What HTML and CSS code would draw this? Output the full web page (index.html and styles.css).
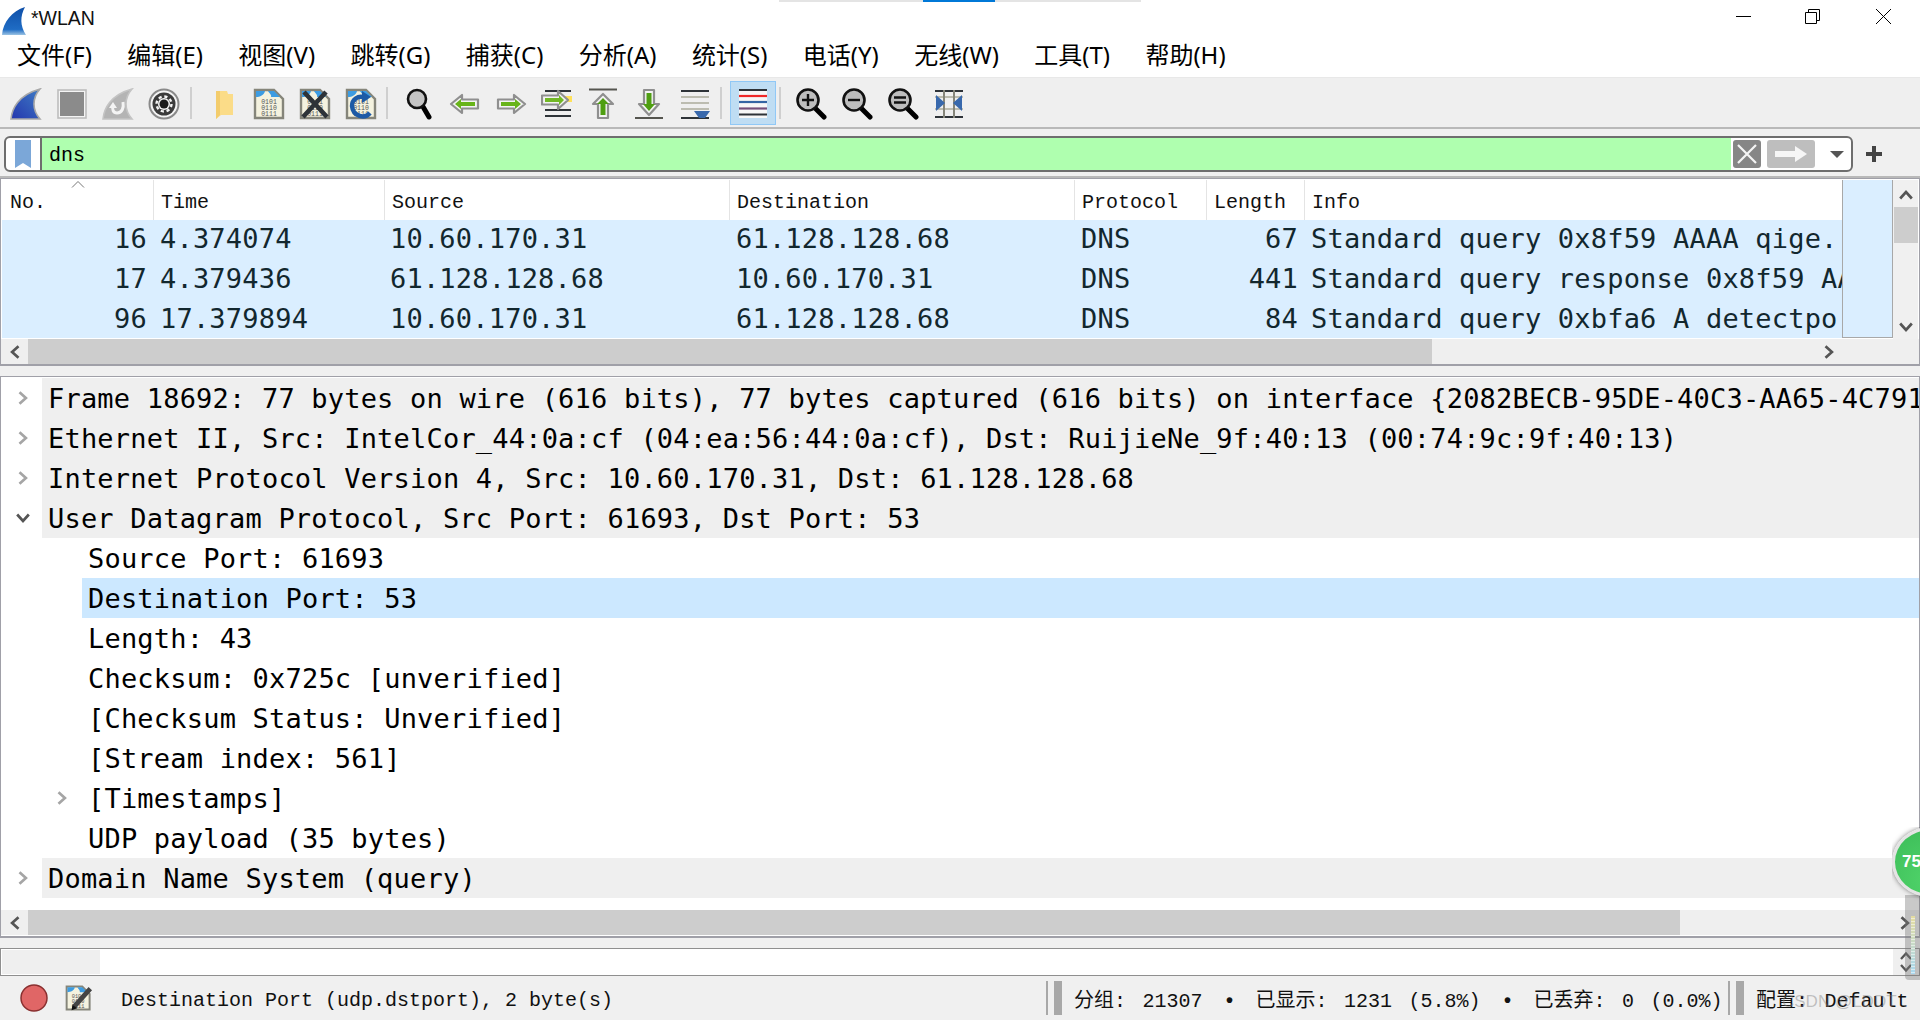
FILE: index.html
```html
<!DOCTYPE html>
<html lang="en">
<head>
    <meta charset="UTF-8">
    <title>*WLAN</title>
    <link rel="stylesheet" href="styles.css">
</head>
<body>
<svg class="defs" width="0" height="0">
    <defs>
        <linearGradient id="finblue" x1="0" y1="1" x2="1" y2="0">
            <stop offset="0" stop-color="#2436ae"/>
            <stop offset="1" stop-color="#3f7cc4"/>
        </linearGradient>
        <linearGradient id="titlefin" x1="0" y1="0" x2="0" y2="1">
            <stop offset="0" stop-color="#0f4fa8"/>
            <stop offset="0.8" stop-color="#1f6cc4"/>
            <stop offset="1" stop-color="#9cc4e4"/>
        </linearGradient>
        <symbol id="chev" viewBox="0 0 12 12">
            <path d="M3 1 8.500 6 3 11" fill="none" stroke="currentColor" stroke-width="2.300"/>
        </symbol>
        <symbol id="file" viewBox="0 0 32 32">
            <path d="M2 2H21L30 11V30H2Z" fill="#f4f2df" stroke="#85857a" stroke-width="2.400"/>
            <path d="M3 3H12C11 7 7 9 3 9Z" fill="#3d9ce2"/>
            <path d="M15 3H21L27 9H18C19 7 16 5 15 3Z" fill="#3d9ce2"/>
            <text x="16" y="16" class="bits">0101</text>
            <text x="16" y="22" class="bits">0110</text>
            <text x="16" y="28" class="bits">0111</text>
        </symbol>
        <symbol id="glass" viewBox="0 0 32 32">
            <path d="M19 19 29 29" stroke="#000" stroke-width="5" stroke-linecap="round"/>
            <circle cx="13" cy="12" r="10.500" fill="#bdbdbd" stroke="#111" stroke-width="2.600"/>
        </symbol>
    </defs>
</svg>

<div class="sliver"><span class="sliver-on"></span></div>

<div class="titlebar">
    <svg class="title-icon" viewBox="0 0 24 28"><path d="M0 28C1 15 10 4 23 0 18 9 18 19 24 28Z" fill="url(#titlefin)"/></svg>
    <span class="title-text">*WLAN</span>
    <div class="winbtns">
        <svg width="15" height="15" viewBox="0 0 15 15"><path d="M0 7.500H15" stroke="#000"/></svg>
        <svg class="win-restore" width="15" height="15" viewBox="0 0 15 15"><path d="M.5 3.500H11.500V14.500H.5ZM3.500 3.500V.5H14.500V11.500H11.500" fill="none" stroke="#000"/></svg>
        <svg width="15" height="15" viewBox="0 0 15 15"><path d="M0 0 15 15M15 0 0 15" stroke="#000"/></svg>
    </div>
</div>

<div class="menubar">
    <span>文件(F)</span>
    <span>编辑(E)</span>
    <span>视图(V)</span>
    <span>跳转(G)</span>
    <span>捕获(C)</span>
    <span>分析(A)</span>
    <span>统计(S)</span>
    <span>电话(Y)</span>
    <span>无线(W)</span>
    <span>工具(T)</span>
    <span>帮助(H)</span>
</div>

<div class="toolbar">
    <div class="tool"><svg viewBox="0 0 32 32"><path d="M1 31C2 21 8 7 30 1 22 10 22 22 30 31Z" fill="url(#finblue)" stroke="#a9a9a9" stroke-width="1.600"/></svg></div>
    <div class="tool"><svg viewBox="0 0 32 32"><rect x="3" y="3" width="26" height="26" fill="#8b8b8b" stroke="#f4f4f4" stroke-width="2"/><rect x="2" y="2" width="28" height="28" fill="none" stroke="#bdbdbd" stroke-width="1.600"/></svg></div>
    <div class="tool"><svg viewBox="0 0 32 32"><path d="M1 31C2 21 8 7 30 1 22 10 22 22 30 31Z" fill="#b4b4b4" stroke="#c4c4c4" stroke-width="1.600"/><path d="M21 14C22 20 20 25 15 25 11 25 10 21 11 18" fill="none" stroke="#f4f4f4" stroke-width="3"/><path d="M7 20 11 14 15 20Z" fill="#f4f4f4"/></svg></div>
    <div class="tool"><svg viewBox="0 0 32 32"><circle cx="16" cy="16" r="14.500" fill="#f4f4f4" stroke="#8a8a8a" stroke-width="2"/><circle cx="16" cy="16" r="11.500" fill="#3b3b3b"/><circle cx="16" cy="16" r="7.500" fill="none" stroke="#f4f4f4" stroke-width="2.400" stroke-dasharray="3.200 2.700"/><circle cx="16" cy="16" r="6" fill="#f4f4f4"/><circle cx="16" cy="16" r="4.500" fill="#1c1c1c"/></svg></div>
    <i class="sep"></i>
    <div class="tool"><svg viewBox="0 0 32 32"><path d="M9 3H20L21 6H26V27H14L9 31Z" fill="#fbdc88"/><path d="M9 3H13V27L9 31Z" fill="#f3cc6c"/></svg></div>
    <div class="tool"><svg><use href="#file"/></svg></div>
    <div class="tool"><svg viewBox="0 0 32 32"><use href="#file" width="32" height="32"/><path d="M5 4 28 29M27 4 4 29" stroke="#2e3338" stroke-width="4.600"/></svg></div>
    <div class="tool"><svg viewBox="0 0 32 32"><use href="#file" width="32" height="32"/><path d="M25 25C20 31 8 29 7 18 7 11 13 8 18 9" fill="none" stroke="#1d5aa6" stroke-width="4.400"/><path d="M17 3 26 9 17 15Z" fill="#1d5aa6"/></svg></div>
    <i class="sep sep-b"></i>
    <div class="tool"><svg viewBox="0 0 32 32"><path d="M19 17 26 29" stroke="#000" stroke-width="5" stroke-linecap="round"/><ellipse cx="14" cy="11" rx="9" ry="9" fill="#c4c4c4" stroke="#111" stroke-width="2.600"/></svg></div>
    <div class="tool"><svg viewBox="0 0 32 32"><path d="M2 16 13 7V11.500H29V20.500H13V25Z" fill="#f4f4f4" stroke="#8f8f8f" stroke-width="2.200" stroke-linejoin="round"/><path d="M6 16 12 11V14H26V18H12V21Z" fill="#68b41a"/></svg></div>
    <div class="tool"><svg viewBox="0 0 32 32"><path d="M30 16 19 7V11.500H3V20.500H19V25Z" fill="#f4f4f4" stroke="#8f8f8f" stroke-width="2.200" stroke-linejoin="round"/><path d="M26 16 20 11V14H6V18H20V21Z" fill="#68b41a"/></svg></div>
    <div class="tool"><svg viewBox="0 0 32 32"><path d="M4 3H30M4 22H30M4 28H30M4 9H30" stroke="#2e3338" stroke-width="2.200"/><rect x="24" y="8" width="7" height="6" fill="#ffe15a"/><path d="M27 12 17 3V7.500H1V16.500H17V21Z" fill="#f4f4f4" stroke="#8f8f8f" stroke-width="2.200" stroke-linejoin="round"/><path d="M23 12 18 7V10H4V14H18V17Z" fill="#72b826"/></svg></div>
    <div class="tool"><svg viewBox="0 0 32 32"><path d="M2 1.500H30" stroke="#55554f" stroke-width="2"/><path d="M16 6 26 16H21V30H11V16H6Z" fill="#f4f4f4" stroke="#8f8f8f" stroke-width="2.200" stroke-linejoin="round"/><path d="M16 10 22 16H18.500V27H13.500V16H10Z" fill="#4f9e12"/></svg></div>
    <div class="tool"><svg viewBox="0 0 32 32"><path d="M2 30H30" stroke="#55554f" stroke-width="2"/><path d="M16 27 26 16H21V2H11V16H6Z" fill="#f4f4f4" stroke="#8f8f8f" stroke-width="2.200" stroke-linejoin="round"/><path d="M16 23 22 16H18.500V5H13.500V16H10Z" fill="#4f9e12"/></svg></div>
    <div class="tool"><svg viewBox="0 0 32 32"><path d="M2 3H30M2 30H30" stroke="#2e3338" stroke-width="2.200"/><path d="M2 9H30M2 15H30M2 21H30" stroke="#bcbcb0" stroke-width="2.200"/><path d="M15 23H31L26 30H20Z" fill="#3868ac"/></svg></div>
    <i class="sep sep-c"></i>
    <div class="tool tool-on"><svg viewBox="0 0 32 32"><rect x="2" y="2" width="28" height="29" fill="#f7f7f7"/><path d="M2 3H30M2 27.500H30" stroke="#2e3338" stroke-width="2.200"/><path d="M2 9H30" stroke="#ef2929" stroke-width="2.200"/><path d="M2 15H30" stroke="#3465a4" stroke-width="2.200"/><path d="M2 21.500H30" stroke="#75507b" stroke-width="2.200"/></svg></div>
    <i class="sep sep-d"></i>
    <div class="tool"><svg viewBox="0 0 32 32"><use href="#glass" width="32" height="32"/><path d="M13 6V18M7 12H19" stroke="#111" stroke-width="2.400"/></svg></div>
    <div class="tool"><svg viewBox="0 0 32 32"><use href="#glass" width="32" height="32"/><path d="M7 12H19" stroke="#111" stroke-width="2.400"/></svg></div>
    <div class="tool"><svg viewBox="0 0 32 32"><use href="#glass" width="32" height="32"/><path d="M7 9.500H19M7 14.500H19" stroke="#111" stroke-width="2.400"/></svg></div>
    <div class="tool"><svg viewBox="0 0 32 32"><path d="M2 9H30M2 21H30" stroke="#bcbcb0" stroke-width="2.200"/><path d="M2 3H30M2 29H30" stroke="#2e3338" stroke-width="2.200"/><path d="M11 2V30M21 2V30" stroke="#85857a" stroke-width="2"/><path d="M3 7 12 15 3 23ZM29 7 20 15 29 23Z" fill="#3868ac"/></svg></div>
</div>

<div class="filterbar">
    <div class="filter">
        <div class="filter-mark"><svg width="16" height="28" viewBox="0 0 16 28"><path d="M0 0H16V28L8 23 0 28Z" fill="#7ba7d8"/></svg></div>
        <div class="filter-text">dns</div>
        <div class="filter-clear"><svg width="20" height="20" viewBox="0 0 20 20"><path d="M1 1 19 19M19 1 1 19" stroke="#f4f4f4" stroke-width="2.200"/></svg></div>
        <div class="filter-apply"><svg width="34" height="16" viewBox="0 0 34 16"><path d="M1 5H21V0L33 8 21 16V11H1Z" fill="#f6f6f6"/></svg></div>
        <div class="filter-drop"></div>
    </div>
    <svg class="filter-plus" width="16" height="16" viewBox="0 0 16 16"><path d="M8 0V16M0 8H16" stroke="#444" stroke-width="4"/></svg>
</div>

<div class="packets">
    <div class="packets-main">
        <div class="plist">
            <div class="prow phead">
                <div>No.<svg class="sort" width="14" height="7" viewBox="0 0 14 7"><path d="M1 6.500 7 .5 13 6.500" fill="none" stroke="#777"/></svg></div>
                <div>Time</div>
                <div>Source</div>
                <div>Destination</div>
                <div>Protocol</div>
                <div>Length</div>
                <div>Info</div>
            </div>
            <div class="prow pdata">
                <div class="num">16</div><div>4.374074</div><div>10.60.170.31</div><div>61.128.128.68</div><div>DNS</div><div class="num">67</div><div>Standard query 0x8f59 AAAA qige..</div>
            </div>
            <div class="prow pdata">
                <div class="num">17</div><div>4.379436</div><div>61.128.128.68</div><div>10.60.170.31</div><div>DNS</div><div class="num">441</div><div>Standard query response 0x8f59 AAAA</div>
            </div>
            <div class="prow pdata">
                <div class="num">96</div><div>17.379894</div><div>10.60.170.31</div><div>61.128.128.68</div><div>DNS</div><div class="num">84</div><div>Standard query 0xbfa6 A detectpo</div>
            </div>
        </div>
        <div class="minimap"></div>
        <div class="vscroll">
            <svg class="chev up"><use href="#chev"/></svg>
            <div class="vthumb"></div>
            <svg class="chev down"><use href="#chev"/></svg>
        </div>
    </div>
    <div class="hscroll">
        <div class="hbtn"><svg class="chev left"><use href="#chev"/></svg></div>
        <div class="hthumb thumb-a"></div>
        <div class="hbtn hbtn-a"><svg class="chev"><use href="#chev"/></svg></div>
    </div>
</div>

<div class="details">
    <div class="tree">
        <div class="node top"><svg class="chev tw"><use href="#chev"/></svg><span>Frame 18692: 77 bytes on wire (616 bits), 77 bytes captured (616 bits) on interface {2082BECB-95DE-40C3-AA65-4C791</span></div>
        <div class="node top"><svg class="chev tw"><use href="#chev"/></svg><span>Ethernet II, Src: IntelCor_44:0a:cf (04:ea:56:44:0a:cf), Dst: RuijieNe_9f:40:13 (00:74:9c:9f:40:13)</span></div>
        <div class="node top"><svg class="chev tw"><use href="#chev"/></svg><span>Internet Protocol Version 4, Src: 10.60.170.31, Dst: 61.128.128.68</span></div>
        <div class="node top"><svg class="chev tw open"><use href="#chev"/></svg><span>User Datagram Protocol, Src Port: 61693, Dst Port: 53</span></div>
        <div class="node sub"><span>Source Port: 61693</span></div>
        <div class="node sub sel"><span>Destination Port: 53</span></div>
        <div class="node sub"><span>Length: 43</span></div>
        <div class="node sub"><span>Checksum: 0x725c [unverified]</span></div>
        <div class="node sub"><span>[Checksum Status: Unverified]</span></div>
        <div class="node sub"><span>[Stream index: 561]</span></div>
        <div class="node sub"><svg class="chev tw tw-sub"><use href="#chev"/></svg><span>[Timestamps]</span></div>
        <div class="node sub"><span>UDP payload (35 bytes)</span></div>
        <div class="node top"><svg class="chev tw"><use href="#chev"/></svg><span>Domain Name System (query)</span></div>
    </div>
    <div class="hscroll">
        <div class="hbtn"><svg class="chev left"><use href="#chev"/></svg></div>
        <div class="hthumb thumb-b"></div>
        <div class="hbtn hbtn-b"><svg class="chev"><use href="#chev"/></svg></div>
    </div>
</div>

<div class="bytes">
    <div class="bytes-stub"></div>
    <div class="bytes-spin">
        <svg class="chev up small"><use href="#chev"/></svg>
        <svg class="chev down small"><use href="#chev"/></svg>
    </div>
</div>

<div class="statusbar">
    <svg class="st-led" width="28" height="28" viewBox="0 0 28 28"><circle cx="14" cy="14" r="13" fill="#e06666" stroke="#8a3030" stroke-width="1.500"/></svg>
    <svg class="st-note" width="30" height="30" viewBox="0 0 32 32"><use href="#file" width="28" height="32"/><path d="M10 25 27 6" stroke="#444" stroke-width="5"/><path d="M7 29 8 23 13 27Z" fill="#111"/></svg>
    <span class="st-msg">Destination Port (udp.dstport), 2 byte(s)</span>
    <i class="st-grip"></i>
    <span class="st-counts">分组: 21307<b>•</b>已显示: 1231 (5.8%)<b>•</b>已丢弃: 0 (0.0%)</span>
    <i class="st-grip st-grip-b"></i>
    <span class="st-profile">配置: Default</span>
</div>

<div class="watermark">CSDN @LDDT</div>
<div class="meter"><div class="meter-ball">75</div><div class="meter-bars"></div></div>
</body>
</html>
```

FILE: styles.css
```css
html, body {
    margin: 0;
    height: 1020px;
    overflow: hidden;
}
body {
    background-color: #f0f0f0;
    color: #000;
    font-family: "Liberation Mono", "Noto Sans CJK SC", monospace;
    font-size: 20px;
    position: relative;
}
.defs {
    position: absolute;
}
.bits {
    font-family: "Liberation Mono", monospace;
    font-size: 6.500px;
    fill: #555;
    text-anchor: middle;
}

/* window chrome */
.sliver {
    position: absolute;
    left: 779px;
    top: 0;
    width: 362px;
    height: 2px;
    background-color: #e4e4e4;
}
.sliver-on {
    display: block;
    margin-left: 144px;
    width: 72px;
    height: 2px;
    background-color: #0078d7;
}
.titlebar {
    height: 40px;
    box-sizing: border-box;
    padding-bottom: 4px;
    background: #fff;
    display: flex;
    align-items: center;
    font-family: "Liberation Sans", "Noto Sans", sans-serif;
    font-size: 19.500px;
}
.title-icon {
    width: 24px;
    height: 28px;
    margin: 6px 0 0 2px;
}
.title-text {
    margin-left: 5px;
    color: #111;
}
.winbtns {
    margin-left: auto;
    display: flex;
    gap: 54px;
    padding-right: 29px;
    margin-top: -4px;
}
.win-restore {
    margin-right: 2px;
}
.menubar {
    height: 37px;
    box-sizing: border-box;
    padding: 0 0 7px 0;
    margin-left: 0;
    background: #fff;
    display: flex;
    align-items: center;
    font-family: "Noto Sans", "Noto Sans CJK SC", sans-serif;
    font-size: 24px;
    line-height: 30px;
}
.menubar span {
    padding: 0 17.700px 0 17px;
    margin-right: 0.700px;
    white-space: nowrap;
}

/* toolbar */
.toolbar {
    height: 49px;
    border-top: 1px solid #e8e8e8;
    border-bottom: 2px solid #b9b9b9;
    background: #efefef;
    display: flex;
    align-items: center;
    padding-left: 3px;
    box-sizing: content-box;
}
.tool {
    width: 46px;
    height: 44px;
    padding-top: 2px;
    display: flex;
    align-items: center;
    justify-content: center;
    flex: none;
    box-sizing: border-box;
}
.tool svg {
    width: 32px;
    height: 32px;
}
.tool-on {
    padding-top: 0;
    background-color: #bfddf3;
    border: 1px solid #90c8f6;
}
.sep {
    flex: none;
    width: 2px;
    height: 32px;
    background-color: #cfcfcf;
    margin: 0 8px 0 3px;
}
.sep-b {
    margin: 0 8px 0 2px;
}
.sep-c {
    margin: 0 8px 0 2px;
}
.sep-d {
    margin: 0 7px 0 3px;
}

/* display filter */
.filterbar {
    height: 49px;
    display: flex;
    align-items: flex-start;
    padding-top: 7px;
    box-sizing: border-box;
    border-bottom: 2px solid #b9b9b9;
}
.filter {
    margin-left: 4px;
    width: 1849px;
    height: 36px;
    box-sizing: border-box;
    border: 2px solid #6e6e6e;
    border-radius: 6px;
    background: #fff;
    display: flex;
    align-items: center;
    overflow: hidden;
}
.filter-mark {
    width: 34px;
    height: 32px;
    border-right: 2px solid #6e6e6e;
    display: flex;
    justify-content: center;
    align-items: center;
    flex: none;
    box-sizing: content-box;
}
.filter-text {
    flex: 1;
    height: 32px;
    line-height: 36px;
    background-color: #afffaf;
    padding-left: 7px;
}
.filter-clear {
    width: 28px;
    height: 28px;
    margin: 0 6px 0 2px;
    background-color: #868686;
    border-radius: 3px;
    display: flex;
    align-items: center;
    justify-content: center;
    flex: none;
}
.filter-apply {
    width: 48px;
    height: 28px;
    background-color: #bebebe;
    border-radius: 3px;
    display: flex;
    align-items: center;
    justify-content: center;
    flex: none;
}
.filter-drop {
    width: 0;
    height: 0;
    flex: none;
    margin: 0 7px 0 15px;
    border-left: 7px solid transparent;
    border-right: 7px solid transparent;
    border-top: 7px solid #555;
}
.filter-plus {
    margin: 10px 0 0 13px;
}

/* packet list */
.packets {
    height: 188px;
    box-sizing: border-box;
    border: 1px solid #a0a0a8;
    border-width: 1px 1px 2px 1px;
    background: #f0f0f0;
}
.packets-main {
    height: 159px;
    display: flex;
    padding: 1px 1px 0 1px;
    background: #fff;
}
.plist {
    width: 1840px;
    flex: none;
    overflow: hidden;
}
.prow {
    display: grid;
    grid-template-columns: 151px 231px 345px 345px 132px 98px 538px;
    white-space: nowrap;
}
.prow > div {
    overflow: hidden;
    box-sizing: border-box;
}
.phead {
    height: 40px;
    color: #111;
    background: #fff;
}
.phead > div {
    height: 40px;
    line-height: 35px;
    padding: 5px 0 0 8px;
    border-right: 1px solid #e4e4e4;
    margin-right: -1px;
    position: relative;
}
.sort {
    position: absolute;
    left: 69px;
    top: 1px;
}
.pdata {
    height: 40px;
    line-height: 38px;
    background-color: #daeeff;
    color: #12272e;
    font-family: "DejaVu Sans Mono", monospace;
    font-size: 27px;
    letter-spacing: 0.2px;
}
.pdata > div {
    padding-left: 7px;
}
.pdata > div:nth-child(3) {
    padding-left: 6px;
}
.pdata > .num {
    text-align: right;
    padding: 0 6px 0 0;
}
.pdata:last-child {
    height: 38px;
}
.minimap {
    width: 49px;
    height: 157px;
    flex: none;
    background-color: #daeeff;
    border: 1px solid #a8a8a8;
    border-width: 0 1px 1px 1px;
    box-sizing: content-box;
}
.vscroll {
    flex: 1;
    background: #f0f0f0;
    display: flex;
    flex-direction: column;
    align-items: center;
    padding-top: 8px;
    box-sizing: border-box;
}
.vthumb {
    width: 24px;
    height: 36px;
    background-color: #cdcdcd;
    margin: 5px 0 77px;
}
.chev {
    display: block;
    width: 14px;
    height: 14px;
    color: #555;
    flex: none;
}
.chev.up {
    transform: rotate(-90deg);
}
.chev.down {
    transform: rotate(90deg);
}
.chev.left {
    transform: rotate(180deg);
}
.chev.small {
    width: 12px;
    height: 12px;
}
.hscroll {
    height: 25px;
    display: flex;
    align-items: center;
    background: #efefef;
}
.hbtn {
    width: 27px;
    height: 25px;
    display: flex;
    align-items: center;
    justify-content: center;
    flex: none;
}
.hthumb {
    height: 25px;
    background-color: #cdcdcd;
    flex: none;
}
.thumb-a {
    width: 1404px;
}
.thumb-b {
    width: 1652px;
}
.hbtn-a {
    margin-left: 383px;
}
.hbtn-b {
    margin-left: 211px;
}

/* packet details */
.details {
    margin-top: 10px;
    height: 562px;
    box-sizing: border-box;
    border: 1px solid #a0a0a8;
    border-width: 1px 1px 2px 1px;
    background: #fff;
    padding-top: 1px;
}
.tree {
    height: 532px;
    overflow: hidden;
    font-family: "DejaVu Sans Mono", monospace;
    font-size: 27px;
    letter-spacing: 0.2px;
    color: #000;
}
.node {
    height: 40px;
    line-height: 42px;
    white-space: nowrap;
    position: relative;
}
.node.top {
    padding-left: 47px;
    background: linear-gradient(to right, #fff 41px, #efefef 41px);
}
.node.sub {
    padding-left: 87px;
}
.node.sel {
    background: linear-gradient(to right, #fff 81px, #cce8ff 81px);
}
.tw {
    position: absolute;
    left: 15px;
    top: 13px;
    color: #a5a5a5;
}
.tw-sub {
    left: 54px;
}
.tw.open {
    transform: rotate(90deg);
    color: #555;
}

/* packet bytes */
.bytes {
    margin-top: 10px;
    height: 28px;
    box-sizing: border-box;
    border: 1px solid #8f8f8f;
    background: #fff;
    display: flex;
    justify-content: space-between;
}
.bytes-stub {
    width: 98px;
    background-color: #efefef;
    margin: 1px 0 1px 1px;
}
.bytes-spin {
    width: 26px;
    background-color: #efefef;
    display: flex;
    flex-direction: column;
    align-items: center;
    justify-content: center;
}

/* status bar */
.statusbar {
    height: 44px;
    display: flex;
    align-items: center;
    white-space: pre;
    color: #111;
}
.st-led {
    margin-left: 20px;
}
.st-note {
    margin-left: 17px;
}
.st-msg {
    margin: 4px 0 0 26px;
    width: 925px;
}
.st-grip {
    width: 2px;
    height: 34px;
    background-color: #a8a8a8;
    border-right: 6px solid #f0f0f0;
    box-shadow: 8px 0 0 #a8a8a8;
    flex: none;
    box-sizing: content-box;
}
.st-counts {
    margin-left: 20px;
    width: 654px;
    word-spacing: 4.500px;
}
.st-counts b {
    font-weight: bold;
    margin: 0 20px 0 21px;
}
.st-profile {
    margin-left: 20px;
    word-spacing: 4.500px;
}
.watermark {
    position: absolute;
    left: 1782px;
    top: 992px;
    font-family: "Liberation Sans", sans-serif;
    font-size: 17px;
    color: rgba(130, 130, 130, 0.45);
    white-space: nowrap;
}

/* floating network meter */
.meter {
    position: absolute;
    right: 0;
    top: 827px;
    width: 28px;
    height: 153px;
    overflow: hidden;
}
.meter::after {
    content: "";
    position: absolute;
    right: 0;
    top: 68px;
    width: 15px;
    height: 85px;
    border-radius: 0 0 0 4px;
    background-color: rgba(120, 120, 120, 0.4);
}
.meter-bars {
    position: absolute;
    right: 5px;
    top: 89px;
    width: 4px;
    height: 58px;
    background: repeating-linear-gradient(to bottom, transparent 0 2px, rgba(255,255,255,.5) 2px 3px),
        linear-gradient(to bottom, #e4dca0, #a8d8f0);
    z-index: 2;
}
.meter-ball {
    position: absolute;
    left: 0;
    top: 0;
    width: 64px;
    height: 64px;
    border-radius: 50%;
    border: 3px solid #e4e4e4;
    background: radial-gradient(circle at 50% 80%, #50d46a, #3cbc58);
    color: #fff;
    font-family: "Liberation Sans", sans-serif;
    font-weight: bold;
    font-size: 17px;
    line-height: 64px;
    padding-left: 7px;
    box-shadow: 0 0 5px rgba(0,0,0,.5);
    z-index: 1;
}
```
